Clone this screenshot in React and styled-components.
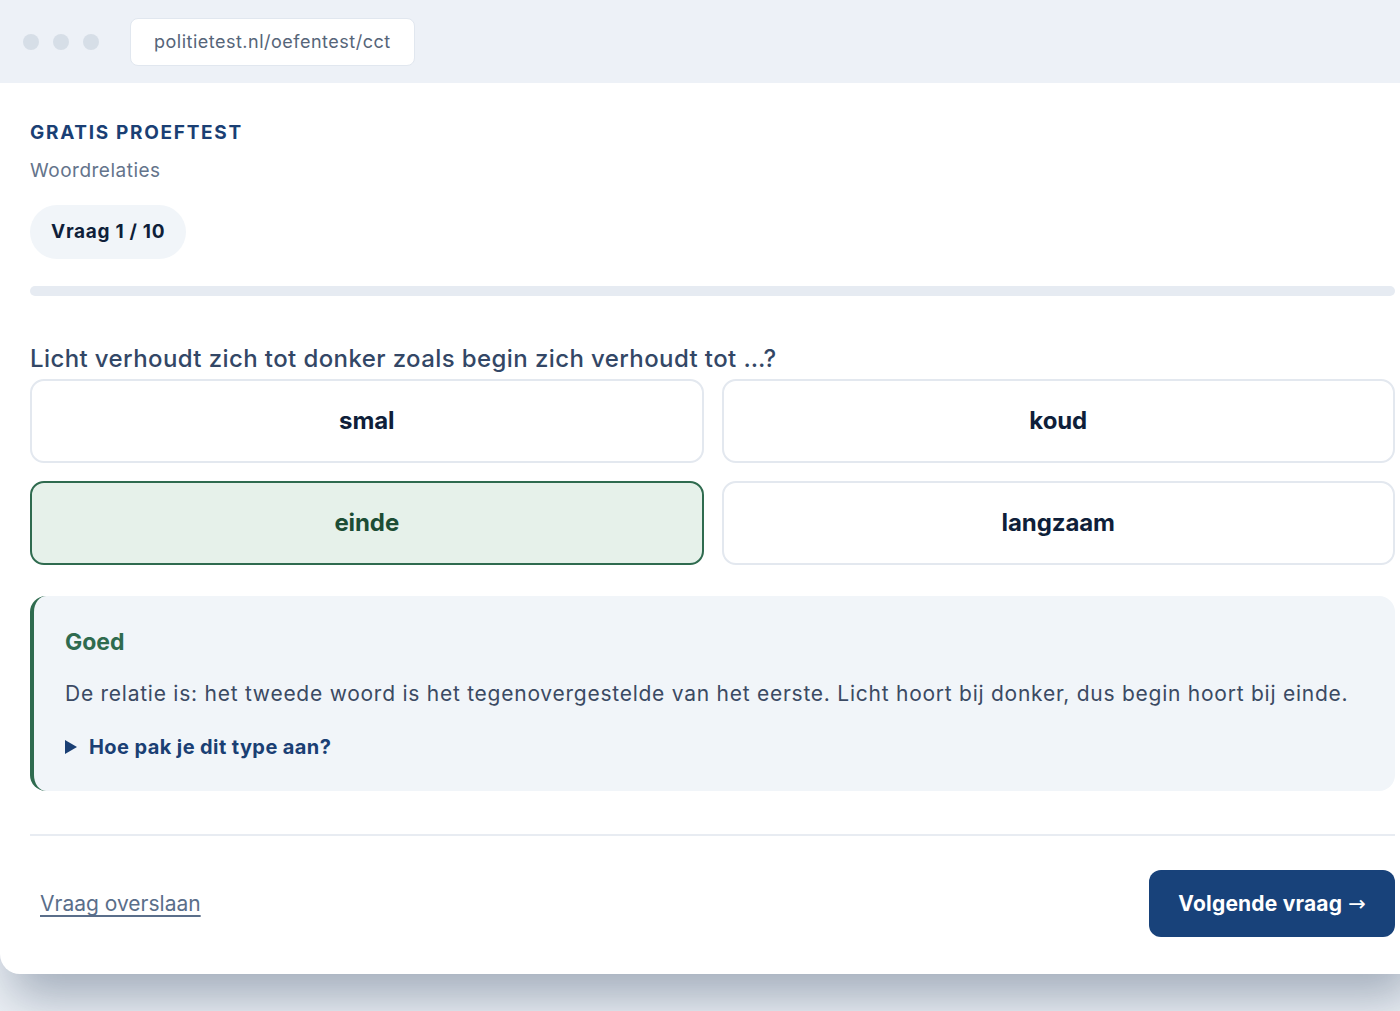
import React from 'react';
import styled, { createGlobalStyle } from 'styled-components';

const GlobalStyle = createGlobalStyle`
  html, body {
    margin: 0;
    padding: 0;
    background: #eef2f7;
    font-family: Inter, "Noto Sans", sans-serif;
    overflow: hidden;
  }
  * { box-sizing: border-box; }
`;

const Stage = styled.div`
  width: 1400px;
  height: 1011px;
  overflow: hidden;
`;

const Window = styled.div`
  width: 1425px;
  background: #ffffff;
  border-radius: 0 0 20px 20px;
  box-shadow: 0 34px 50px -10px rgba(40, 60, 90, 0.38);
  overflow: hidden;
`;

const TopBar = styled.div`
  height: 83px;
  background: #edf1f7;
  display: flex;
  align-items: center;
  padding: 0 23px;
  gap: 14px;
`;

const Dot = styled.span`
  width: 16px;
  height: 16px;
  border-radius: 50%;
  background: #d6dee7;
`;

const Url = styled.div`
  margin-left: 17px;
  height: 48px;
  padding: 0 23px;
  display: flex;
  align-items: center;
  background: #ffffff;
  border: 1px solid #e1e7ef;
  border-radius: 8px;
  color: #566579;
  font-size: 18px;
  letter-spacing: 0.5px;
`;

const Content = styled.div`
  padding: 30px 30px 37px;
  display: flex;
  flex-direction: column;
`;

const Eyebrow = styled.div`
  margin-top: 10px;
  font-size: 19px;
  font-weight: 700;
  letter-spacing: 1.7px;
  color: #1a3f74;
  line-height: 1;
`;

const Subtitle = styled.div`
  margin-top: 18px;
  font-size: 19px;
  color: #64748b;
  line-height: 1.2;
  letter-spacing: 0.5px;
`;

const Counter = styled.div`
  align-self: flex-start;
  margin-top: 22px;
  height: 54px;
  padding: 0 21px;
  display: flex;
  align-items: center;
  border-radius: 27px;
  background: #f1f5f9;
  font-size: 19px;
  font-weight: 700;
  color: #0f1f3a;
  letter-spacing: 0.7px;
  white-space: pre;
`;

const Progress = styled.div`
  margin-top: 27px;
  height: 10px;
  border-radius: 5px;
  background: #e6ebf2;
`;

const Question = styled.h2`
  margin: 49px 0 5px;
  font-size: 24px;
  font-weight: 500;
  color: #334766;
  line-height: 1.2;
  letter-spacing: 0.4px;
`;

const Options = styled.div`
  display: grid;
  grid-template-columns: 1fr 1fr;
  gap: 18px;
`;

const Option = styled.button`
  height: 84px;
  border-radius: 14px;
  border: 2px solid ${p => (p.selected ? '#2f6b4f' : '#e3e8ef')};
  background: ${p => (p.selected ? '#e6f1ea' : '#ffffff')};
  color: ${p => (p.selected ? '#1c4d35' : '#0f1f3a')};
  font-family: inherit;
  font-size: 24px;
  font-weight: 700;
  letter-spacing: -0.1px;
  cursor: pointer;
`;

const Feedback = styled.div`
  margin-top: 31px;
  padding: 33px 35px 32px 31px;
  background: #f1f5f9;
  border-left: 4px solid #2f6b4f;
  border-radius: 16px;
`;

const FeedbackTitle = styled.div`
  font-size: 23px;
  font-weight: 700;
  color: #2f6b4f;
  line-height: 1.2;
`;

const FeedbackText = styled.p`
  margin: 24px 0 0;
  font-size: 21px;
  color: #3b4a63;
  line-height: 1.3;
  letter-spacing: 0.75px;
`;

const Tip = styled.div`
  margin-top: 28px;
  display: flex;
  align-items: center;
  gap: 12px;
  font-size: 20px;
  font-weight: 700;
  color: #1a3f74;
  letter-spacing: 0.4px;
  cursor: pointer;
`;

const Caret = styled.span`
  width: 0;
  height: 0;
  border-top: 7px solid transparent;
  border-bottom: 7px solid transparent;
  border-left: 12px solid #1a3f74;
`;

const Divider = styled.hr`
  margin: 43px 0 0;
  border: none;
  height: 2px;
  background: #e8ecf2;
`;

const Footer = styled.div`
  margin-top: 34px;
  display: flex;
  align-items: center;
  justify-content: space-between;
`;

const SkipLink = styled.a`
  margin-left: 10px;
  font-size: 21px;
  color: #5a6e8a;
  text-decoration: underline;
  text-underline-offset: 4px;
  text-decoration-thickness: 1.5px;
  cursor: pointer;
`;

const NextButton = styled.button`
  height: 67px;
  padding: 0 29px;
  border: none;
  border-radius: 12px;
  background: #18427a;
  color: #ffffff;
  font-family: inherit;
  font-size: 21px;
  font-weight: 700;
  letter-spacing: 0.2px;
  cursor: pointer;
`;

const Arrow = styled.span`
  font-family: "DejaVu Sans", sans-serif;
  font-weight: 400;
  margin-left: 6px;
`;

const options = [
  { label: 'smal' },
  { label: 'koud' },
  { label: 'einde', selected: true },
  { label: 'langzaam' },
];

export default function App() {
  return (
    <Stage>
      <GlobalStyle />
      <Window>
        <TopBar>
          <Dot />
          <Dot />
          <Dot />
          <Url>politietest.nl/oefentest/cct</Url>
        </TopBar>
        <Content>
          <Eyebrow>GRATIS PROEFTEST</Eyebrow>
          <Subtitle>Woordrelaties</Subtitle>
          <Counter>Vraag 1 / 10</Counter>
          <Progress />
          <Question>Licht verhoudt zich tot donker zoals begin zich verhoudt tot …?</Question>
          <Options>
            {options.map(o => (
              <Option key={o.label} selected={o.selected}>
                {o.label}
              </Option>
            ))}
          </Options>
          <Feedback>
            <FeedbackTitle>Goed</FeedbackTitle>
            <FeedbackText>
              De relatie is: het tweede woord is het tegenovergestelde van het eerste. Licht hoort bij donker, dus begin hoort bij einde.
            </FeedbackText>
            <Tip>
              <Caret />
              Hoe pak je dit type aan?
            </Tip>
          </Feedback>
          <Divider />
          <Footer>
            <SkipLink>Vraag overslaan</SkipLink>
            <NextButton>
              Volgende vraag<Arrow>→</Arrow>
            </NextButton>
          </Footer>
        </Content>
      </Window>
    </Stage>
  );
}
